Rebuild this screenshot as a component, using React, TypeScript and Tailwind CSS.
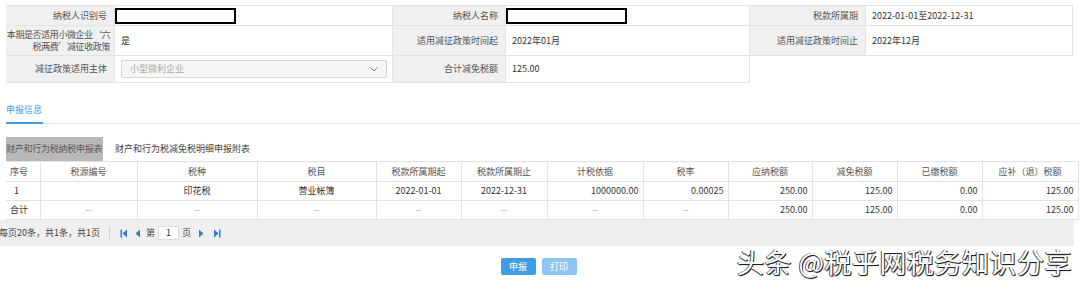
import React from "react";

const font = { fontFamily: '"Noto Sans CJK SC", "Liberation Sans", sans-serif' };

const Label = ({ children, className = "" }: { children: React.ReactNode; className?: string }) => (
  <div
    className={`bg-[#f0f0f0] border-b border-r border-[#e3e3e3] flex items-center justify-end pr-[7px] text-[9px] text-[#555] text-right leading-[12px] ${className}`}
  >
    {children}
  </div>
);

const Value = ({ children, className = "" }: { children?: React.ReactNode; className?: string }) => (
  <div
    className={`border-b border-r border-[#e3e3e3] flex items-center pl-[6px] text-[9px] text-[#333] ${className}`}
  >
    {children}
  </div>
);

const Masked = () => <div className="h-[16px] w-[121px] border-2 border-black bg-white -ml-[6px]" />;

const columns = [
  { title: "序号", w: "w-[34px]" },
  { title: "税源编号", w: "w-[97px]" },
  { title: "税种", w: "w-[120px]" },
  { title: "税目", w: "w-[119px]" },
  { title: "税款所属期起", w: "w-[85px]" },
  { title: "税款所属期止", w: "w-[86px]" },
  { title: "计税依据", w: "w-[96px]" },
  { title: "税率", w: "w-[85px]" },
  { title: "应纳税额", w: "w-[84px]" },
  { title: "减免税额", w: "w-[85px]" },
  { title: "已缴税额", w: "w-[85px]" },
  { title: "应补（退）税额", w: "w-[96px]" },
];

const rows = [
  ["1", "", "印花税", "营业帐簿", "2022-01-01", "2022-12-31", "1000000.00", "0.00025", "250.00", "125.00", "0.00", "125.00"],
  ["合计", "--", "--", "--", "--", "--", "--", "--", "250.00", "125.00", "0.00", "125.00"],
];

// alignment per column: c = center, r = right, l = left
const align = ["l", "c", "c", "c", "c", "c", "r", "r", "r", "r", "r", "r"];

const PagerIcon = ({ dir, bar }: { dir: "l" | "r"; bar?: boolean }) => (
  <svg width="8" height="9" viewBox="0 0 8 9" className="fill-[#2f7fd8]">
    {dir === "l" ? (
      <>
        {bar && <rect x="0.5" y="0.5" width="1.5" height="8" />}
        <polygon points={bar ? "7,0.5 2.5,4.5 7,8.5" : "6,0.5 1.5,4.5 6,8.5"} />
      </>
    ) : (
      <>
        <polygon points={bar ? "1,0.5 5.5,4.5 1,8.5" : "2,0.5 6.5,4.5 2,8.5"} />
        {bar && <rect x="6" y="0.5" width="1.5" height="8" />}
      </>
    )}
  </svg>
);

export default function App() {
  return (
    <div className="relative w-[1080px] h-[282px] bg-white overflow-hidden" style={font}>
      <div className="pl-[6px] pt-[5px]">
        {/* top form */}
        <div className="grid grid-cols-[109px_278px_113px_244px_116px_207px] border-t border-[#e3e3e3] w-[1067px]">
          <Label className="h-[20px]">纳税人识别号</Label>
          <Value>
            <Masked />
          </Value>
          <Label>纳税人名称</Label>
          <Value>
            <Masked />
          </Value>
          <Label>税款所属期</Label>
          <Value>2022-01-01至2022-12-31</Value>

          <Label className="h-[30px] !pr-[4px] tracking-[-0.4px] whitespace-nowrap">
            <span>
              本期是否适用小微企业‘六
              <br />
              税两费’减征收政策
            </span>
          </Label>
          <Value>是</Value>
          <Label>适用减征政策时间起</Label>
          <Value>2022年01月</Value>
          <Label>适用减征政策时间止</Label>
          <Value>2022年12月</Value>

          <Label className="h-[27px]">减征政策适用主体</Label>
          <Value>
            <div className="h-[18px] w-[266px] border border-[#d6d6d6] rounded-[2px] bg-[#f6f6f6] flex items-center justify-between px-[8px] text-[#aaa]">
              <span>小型微利企业</span>
              <svg width="8" height="5" viewBox="0 0 8 5" fill="none" stroke="#888" strokeWidth="1">
                <polyline points="0.5,0.5 4,4 7.5,0.5" />
              </svg>
            </div>
          </Value>
          <Label>合计减免税额</Label>
          <Value>125.00</Value>
          <div />
          <div />
        </div>

        {/* main tab */}
        <div className="mt-[20px] border-b border-[#e6e6e6] w-[1074px] h-[21px] flex items-end">
          <div className="w-[37px] h-[21px] border-b-2 border-[#3f9be6] -mb-px text-[9px] text-[#3f9be6] leading-[14px]">
            申报信息
          </div>
        </div>

        {/* sub tabs */}
        <div className="mt-[13px] flex h-[24px] items-center text-[9px]">
          <div className="w-[97px] h-[24px] bg-[#b8b8b8] text-[#5c5c5c] flex items-center whitespace-nowrap tracking-[-0.25px]">
            财产和行为税纳税申报表
          </div>
          <div className="ml-[12px] text-[#444]">财产和行为税减免税明细申报附表</div>
        </div>

        {/* table */}
        <table className="table-fixed border-collapse text-[9px] w-[1072px]">
          <thead>
            <tr className="h-[20px]">
              {columns.map((c, i) => (
                <th
                  key={c.title}
                  className={`${c.w} font-normal text-[#555] border-t border-b border-r border-[#e3e3e3] whitespace-nowrap ${
                    i === 0 ? "text-left pl-[4px]" : "text-center"
                  }`}
                >
                  {c.title}
                </th>
              ))}
            </tr>
          </thead>
          <tbody>
            {rows.map((r, ri) => (
              <tr key={ri} className="h-[19px]">
                {r.map((v, i) => (
                  <td
                    key={i}
                    className={`border-b border-r border-[#e3e3e3] whitespace-nowrap ${
                      v === "--" ? "text-[#aaa]" : "text-[#333]"
                    } ${
                      align[i] === "l"
                        ? i === 0 && v === "1"
                          ? "text-left pl-[8px]"
                          : "text-left pl-[4px]"
                        : align[i] === "c" || v === "--"
                        ? "text-center"
                        : "text-right pr-[4px]"
                    }`}
                  >
                    {v}
                  </td>
                ))}
              </tr>
            ))}
          </tbody>
        </table>

        {/* pager */}
        <div className="h-[26px] bg-[#efefef] w-[1074px] -ml-[6px] flex items-center text-[9px] text-[#444]">
          <span className="-ml-[1px]">每页20条，共1条，共1页</span>
          <div className="ml-[9px] w-px h-[14px] bg-[#d0d0d0]" />
          <div className="ml-[10px] flex items-center gap-[6px]">
            <PagerIcon dir="l" bar />
            <PagerIcon dir="l" />
          </div>
          <span className="ml-[4px]">第</span>
          <div className="ml-[3px] w-[21px] h-[14px] bg-white border border-[#ddd] flex items-center justify-center text-[#333]">
            1
          </div>
          <span className="ml-[3px]">页</span>
          <div className="ml-[6px] flex items-center gap-[8px]">
            <PagerIcon dir="r" />
            <PagerIcon dir="r" bar />
          </div>
        </div>

        {/* buttons */}
        <div className="mt-[12px] flex justify-center gap-[6px] w-[1074px] -ml-[6px] pl-[3px]">
          <button className="w-[35px] h-[17px] rounded-[2px] bg-[#3f9de6] text-white text-[9px] leading-none">
            申报
          </button>
          <button className="w-[35px] h-[17px] rounded-[2px] bg-[#8ec5f2] text-white text-[9px] leading-none">
            打印
          </button>
        </div>
      </div>

      {/* watermark */}
      <div className="absolute left-[737px] top-[246px] text-[27px] leading-[32px] text-white tracking-[0.5px] [text-shadow:1px_1px_0_#222,-1px_0_0_#555,0_1px_1px_#222]">
        头条 @税乎网税务知识分享
      </div>
    </div>
  );
}
